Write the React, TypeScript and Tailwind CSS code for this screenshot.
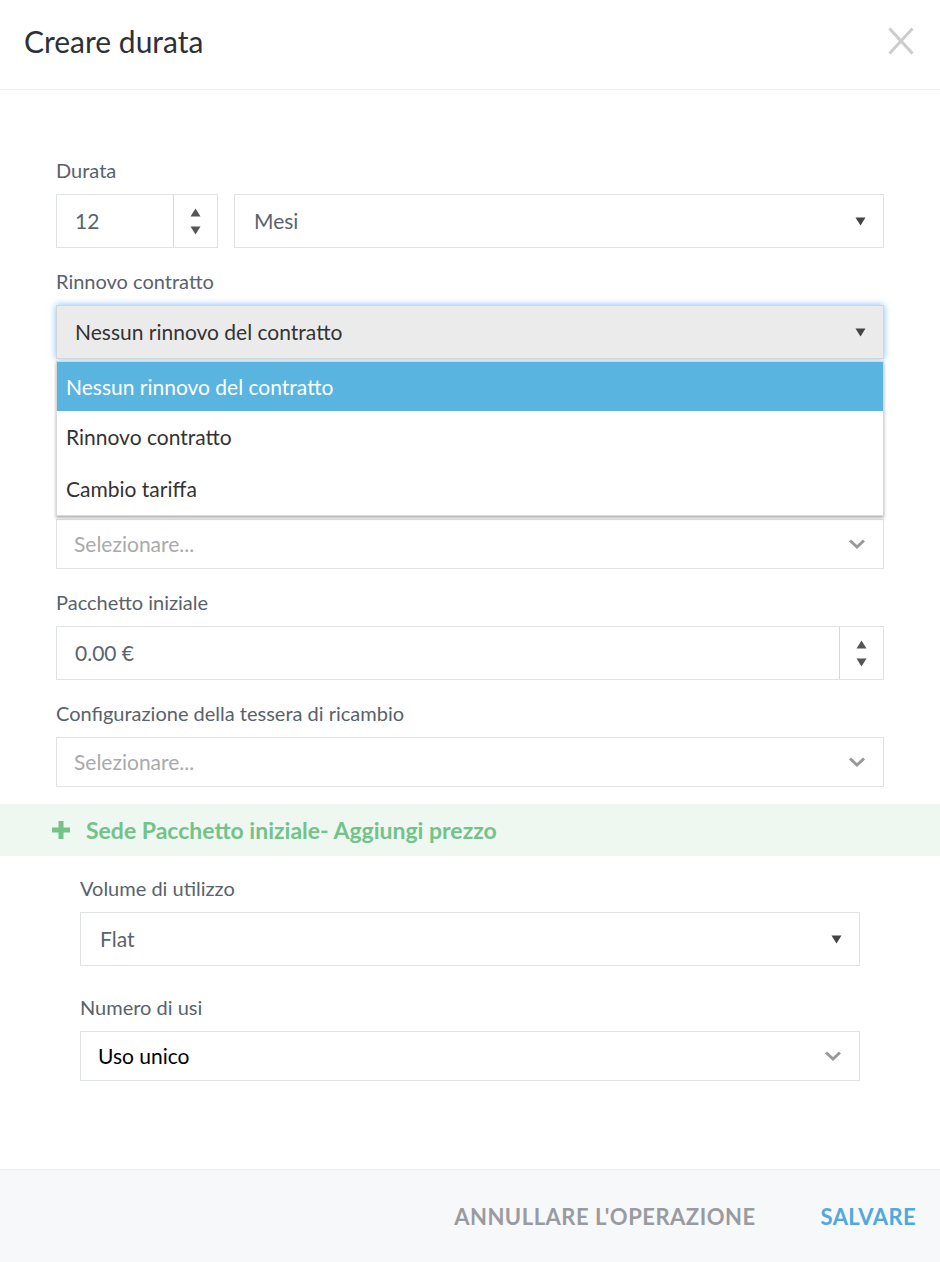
import React from "react";

const Tri = () => (
  <svg width="11" height="9" viewBox="0 0 11 9" className="shrink-0">
    <path d="M0.5 0.5 L10.5 0.5 L5.5 8.5 Z" fill="#444" />
  </svg>
);

const Chevron = () => (
  <svg width="18" height="12" viewBox="0 0 18 12" className="shrink-0">
    <path d="M2 2.5 L9 9 L16 2.5" fill="none" stroke="#999" strokeWidth="3" />
  </svg>
);

const Spinner = () => (
  <div className="flex flex-col items-center justify-center gap-[9px] w-[44px] h-full border-l border-[#d5d9dc]">
    <svg width="11" height="9" viewBox="0 0 11 9">
      <path d="M0.5 8.5 L10.5 8.5 L5.5 0.5 Z" fill="#555" />
    </svg>
    <svg width="11" height="9" viewBox="0 0 11 9">
      <path d="M0.5 0.5 L10.5 0.5 L5.5 8.5 Z" fill="#555" />
    </svg>
  </div>
);

const Label = ({ children }: { children: React.ReactNode }) => (
  <div className="text-[20px] leading-[24px] h-[24px] text-[#58626b] mb-[11px]">{children}</div>
);

export default function App() {
  return (
    <div
      className="w-[940px] h-[1262px] bg-white flex flex-col overflow-hidden"
      style={{ fontFamily: "Lato, 'Open Sans', sans-serif" }}
    >
      {/* Header */}
      <div className="h-[90px] shrink-0 border-b border-[#eeeeee] flex items-start justify-between pl-[24px] pr-[26px] pt-[22px]">
        <div className="text-[30px] leading-[38px] text-[#2c3038]">Creare durata</div>
        <svg width="26" height="28" viewBox="0 0 26 28" className="mt-[5px]">
          <path d="M1.5 1.5 L24.5 26.5 M24.5 1.5 L1.5 26.5" stroke="#cccccc" strokeWidth="3" />
        </svg>
      </div>

      {/* Body */}
      <div className="flex-1 flex flex-col">
        <div className="px-[56px] pt-[68px] flex flex-col">
          {/* Durata */}
          <Label>Durata</Label>
          <div className="flex gap-[16px] h-[54px] mt-[1px]">
            <div className="w-[162px] flex border border-[#dfe3e5] bg-white">
              <div className="flex-1 flex items-center pl-[18px] text-[21px] text-[#5b646c]">12</div>
              <Spinner />
            </div>
            <div className="flex-1 flex items-center justify-between border border-[#dfe3e5] pl-[19px] pr-[17px] text-[21px] text-[#5b646c]">
              <span>Mesi</span>
              <Tri />
            </div>
          </div>

          {/* Rinnovo contratto */}
          <div className="mt-[21px]">
            <Label>Rinnovo contratto</Label>
          </div>
          <div className="relative z-10 mt-[1px]">
            <div className="h-[54px] flex items-center justify-between bg-[#ebebeb] border border-[#cfd6dc] shadow-[0_0_7px_rgba(90,170,235,0.75)] pl-[18px] pr-[17px] text-[21px] text-[#333333]">
              <span>Nessun rinnovo del contratto</span>
              <Tri />
            </div>
            <div className="absolute left-0 right-0 top-full mt-[2px] bg-white border border-[#d8d8d8] shadow-[0_2px_3px_rgba(0,0,0,0.3)] flex flex-col text-[21px]">
              <div className="h-[49px] flex items-center px-[9px] bg-[#5ab4e0] text-white">Nessun rinnovo del contratto</div>
              <div className="h-[52px] flex items-center px-[9px] text-[#333333]">Rinnovo contratto</div>
              <div className="h-[52px] flex items-center px-[9px] text-[#333333]">Cambio tariffa</div>
            </div>
          </div>

          {/* Space covered by the open menu */}
          <div className="h-[160px]" />
          <div className="h-[50px] flex items-center justify-between border border-[#dfe3e5] pl-[17px] pr-[17px] text-[21px] text-[#aaaaaa]">
            <span>Selezionare...</span>
            <Chevron />
          </div>

          {/* Pacchetto iniziale */}
          <div className="mt-[21px]">
            <Label>Pacchetto iniziale</Label>
          </div>
          <div className="h-[54px] flex border border-[#dfe3e5] mt-[1px]">
            <div className="flex-1 flex items-center pl-[18px] text-[21px] text-[#5b646c]">0.00 €</div>
            <Spinner />
          </div>

          {/* Configurazione */}
          <div className="mt-[21px]">
            <Label>Configurazione della tessera di ricambio</Label>
          </div>
          <div className="h-[50px] flex items-center justify-between border border-[#dfe3e5] pl-[17px] pr-[17px] text-[21px] text-[#aaaaaa] mt-[1px]">
            <span>Selezionare...</span>
            <Chevron />
          </div>
        </div>

        {/* Green bar */}
        <div className="mt-[17px] h-[52px] bg-[#eef8f1] flex items-center pl-[52px] gap-[16px]">
          <svg width="18" height="18" viewBox="0 0 18 18">
            <path d="M9 0 V18 M0 9 H18" stroke="#72c28a" strokeWidth="5" />
          </svg>
          <span className="text-[23px] font-bold text-[#72c28a]">Sede Pacchetto iniziale- Aggiungi prezzo</span>
        </div>

        <div className="px-[80px] pt-[20px] flex flex-col">
          <Label>Volume di utilizzo</Label>
          <div className="h-[54px] flex items-center justify-between border border-[#dfe3e5] pl-[19px] pr-[17px] text-[21px] text-[#5b646c] mt-[1px]">
            <span>Flat</span>
            <Tri />
          </div>
          <div className="mt-[29px]">
            <Label>Numero di usi</Label>
          </div>
          <div className="h-[50px] flex items-center justify-between border border-[#dfe3e5] pl-[17px] pr-[17px] text-[21px] text-black mt-[1px]">
            <span>Uso unico</span>
            <Chevron />
          </div>
        </div>
      </div>

      {/* Footer */}
      <div className="h-[93px] shrink-0 bg-[#f7f8f9] border-t border-[#eeeeee] flex items-center justify-end pr-[24px] gap-[65px]">
        <span className="text-[22px] font-bold text-[#999ba0] tracking-[0.5px]">ANNULLARE L'OPERAZIONE</span>
        <span className="text-[22px] font-bold text-[#4fa9dd] tracking-[0.4px]">SALVARE</span>
      </div>
    </div>
  );
}
